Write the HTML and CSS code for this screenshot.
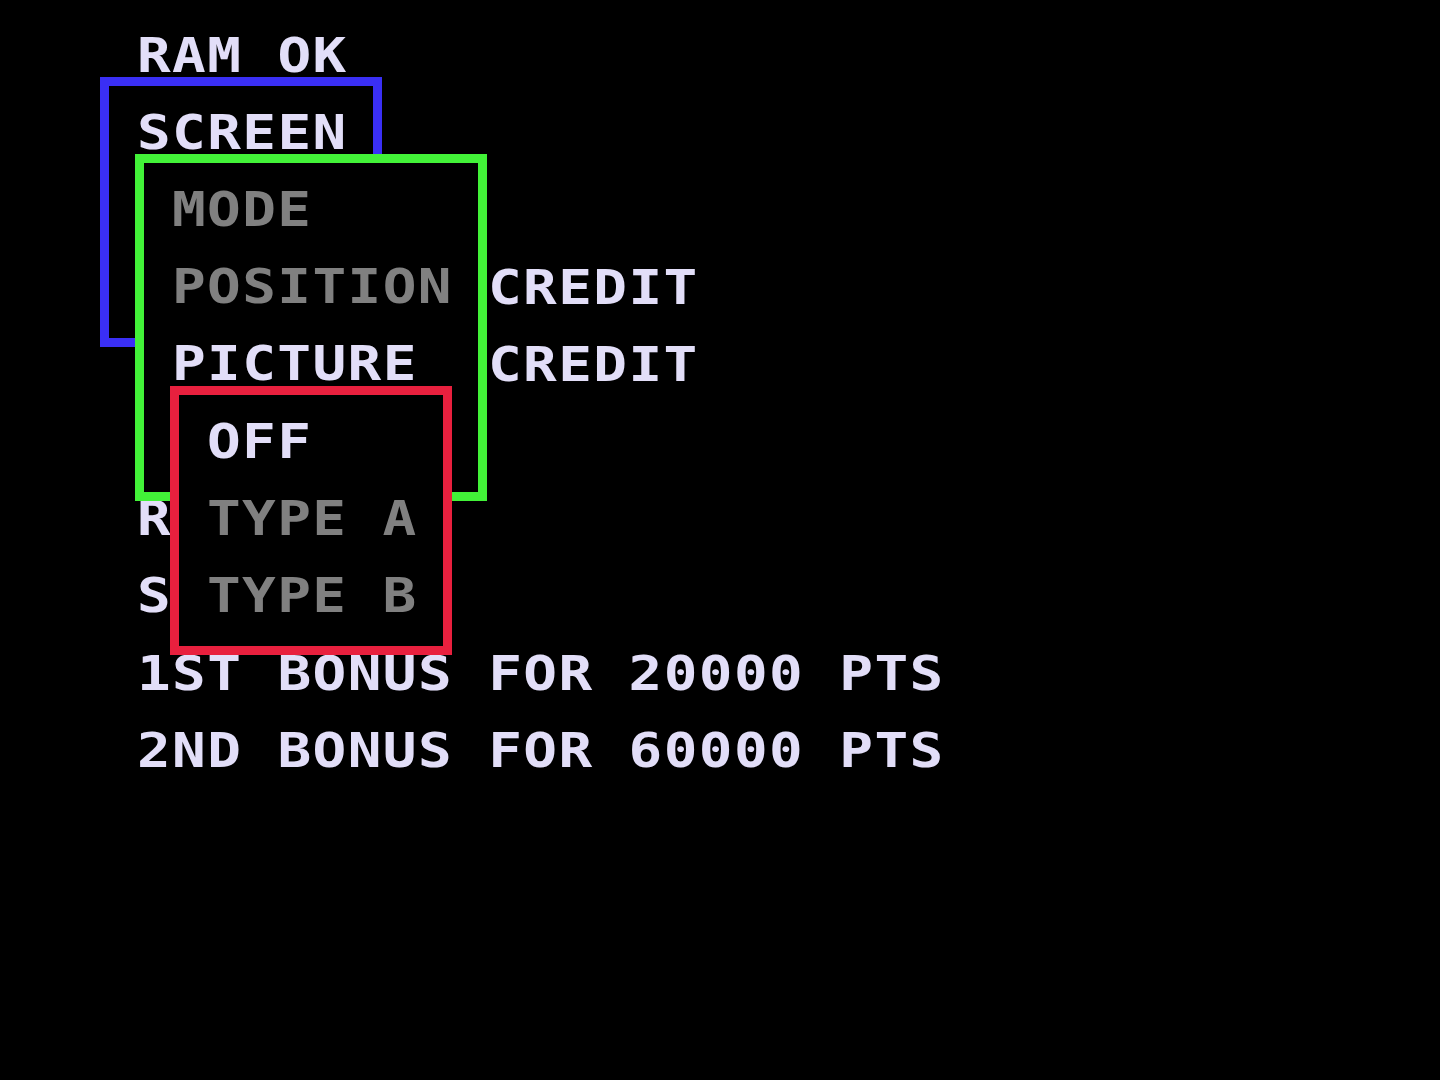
FILE: index.html
```html
<!DOCTYPE html>
<html lang="en">
<head>
<meta charset="utf-8">
<title>Test Mode</title>
<link rel="stylesheet" href="styles.css">
</head>
<body>
<main class="screen">
  <div class="rows">
    <div class="row">RAM OK</div>
    <div class="row"></div>
    <div class="row"></div>
    <div class="row"><span class="col10">CREDIT</span></div>
    <div class="row"><span class="col10">CREDIT</span></div>
    <div class="row"></div>
    <div class="row">R</div>
    <div class="row">S</div>
    <div class="row">1ST BONUS FOR 20000 PTS</div>
    <div class="row">2ND BONUS FOR 60000 PTS</div>
  </div>

  <section class="win win-blue">
    <div class="row">SCREEN</div>
  </section>

  <section class="win win-green">
    <div class="row dim">MODE</div>
    <div class="row dim">POSITION</div>
    <div class="row">PICTURE</div>
  </section>

  <section class="win win-red">
    <div class="row">OFF</div>
    <div class="row dim">TYPE A</div>
    <div class="row dim">TYPE B</div>
  </section>
</main>
</body>
</html>
```
FILE: styles.css
```css
html, body {
  margin: 0;
  padding: 0;
  background: #000;
}

body {
  width: 1440px;
  height: 1080px;
  overflow: hidden;
}

.screen {
  position: relative;
  width: 1440px;
  height: 1080px;
  background: #000;
  color: #e2def8;
  font-family: "DejaVu Sans Mono", "Liberation Mono", monospace;
  font-weight: bold;
  font-size: 56px;
}

.rows {
  padding: 17px 0 0 137px;
}

.row {
  height: 77.2px;
  line-height: 77.2px;
  white-space: pre;
  letter-spacing: 1.4px;
  transform: scaleY(0.86);
  transform-origin: 0 37.6px;
}

.col10 {
  padding-left: 351px;
}

.dim {
  color: #808080;
}

.win {
  position: absolute;
  box-sizing: border-box;
  background: #000;
  border: 9px solid;
  padding: 8px 0 0 28px;
  overflow: hidden;
}

.win-blue {
  left: 100px;
  top: 77px;
  width: 282px;
  height: 270px;
  border-color: #3a2ff5;
}

.win-green {
  left: 135px;
  top: 154px;
  width: 352px;
  height: 347px;
  border-color: #42f238;
}

.win-red {
  left: 170px;
  top: 386px;
  width: 282px;
  height: 269px;
  border-color: #e8203e;
}
```
